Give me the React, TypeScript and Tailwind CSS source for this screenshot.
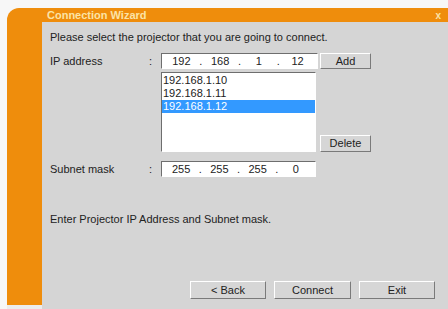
import React from 'react';

const font = { fontFamily: '"Liberation Sans", Arial, sans-serif' };

const Button = ({ label, className = '' }: { label: string; className?: string }) => (
	<div
		className={`flex items-center justify-center bg-[#d6d6d6] border border-t-white border-l-white border-b-[#7a7a7a] border-r-[#7a7a7a] text-[11px] text-[#222] ${className}`}
	>
		{label}
	</div>
);

const Dot = () => <span className="w-0 flex justify-center">.</span>;

const AddressBox = ({ values, className = '' }: { values: string[]; className?: string }) => (
	<div
		className={`flex items-center h-[16px] bg-white border border-t-[#6e6e6e] border-l-[#6e6e6e] border-b-white border-r-white text-[11px] text-[#222] ${className}`}
	>
		<span className="flex-1 text-center">{values[0]}</span>
		<Dot />
		<span className="flex-1 text-center">{values[1]}</span>
		<Dot />
		<span className="flex-1 text-center">{values[2]}</span>
		<Dot />
		<span className="flex-1 text-center">{values[3]}</span>
	</div>
);

const App = () => {
	return (
		<div className="w-[448px] h-[309px] bg-[#f7f7f7] pl-[7px] pt-[8px]" style={font}>
			<div className="flex flex-col h-full bg-[#ef8d0c] rounded-tl-[12px] overflow-hidden">
				<div className="flex items-center justify-between h-[14px] pl-[40px] pr-[7px] text-[11px] font-bold text-[#fbe3a6]">
					<span>Connection Wizard</span>
					<span className="text-[10px]">x</span>
				</div>
				<div className="flex flex-1">
					<div className="w-[35px] flex flex-col">
						<div className="flex-1 bg-[#ef8d0c]" />
						<div className="h-[4px] bg-[#ececec]" />
					</div>
					<div className="flex-1 flex flex-col bg-[#d5d5d5] pl-[8px] text-[11px] text-[#222]">
						<div className="mt-[8px] leading-[14px]">Please select the projector that you are going to connect.</div>

						<div className="flex items-center mt-[9px]">
							<span className="w-[99px]">IP address</span>
							<span className="w-[12px]">:</span>
							<AddressBox values={['192', '168', '1', '12']} className="w-[157px]" />
							<Button label="Add" className="ml-[2px] w-[51px] h-[16px]" />
						</div>

						<div className="flex items-end mt-[2px]">
							<div className="w-[111px]" />
							<div className="w-[155px] h-[80px] bg-white border border-t-[#6e6e6e] border-l-[#6e6e6e] border-b-white border-r-white pt-[1px] leading-[13px]">
								<div className="pl-[1px]">192.168.1.10</div>
								<div className="pl-[1px]">192.168.1.11</div>
								<div className="pl-[1px] bg-[#3399ff] text-white">192.168.1.12</div>
							</div>
							<Button label="Delete" className="ml-[4px] w-[51px] h-[17px]" />
						</div>

						<div className="flex items-center mt-[9px]">
							<span className="w-[99px]">Subnet mask</span>
							<span className="w-[12px]">:</span>
							<AddressBox values={['255', '255', '255', '0']} className="w-[155px]" />
						</div>

						<div className="mt-[35px] leading-[14px]">Enter Projector IP Address and Subnet mask.</div>

						<div className="flex-1" />
						<div className="flex mb-[10px] pl-[140px] gap-[8px]">
							<Button label="< Back" className="w-[76px] h-[18px]" />
							<Button label="Connect" className="w-[77px] h-[18px]" />
							<Button label="Exit" className="w-[76px] h-[18px]" />
						</div>
					</div>
				</div>
			</div>
		</div>
	);
};

export default App;
